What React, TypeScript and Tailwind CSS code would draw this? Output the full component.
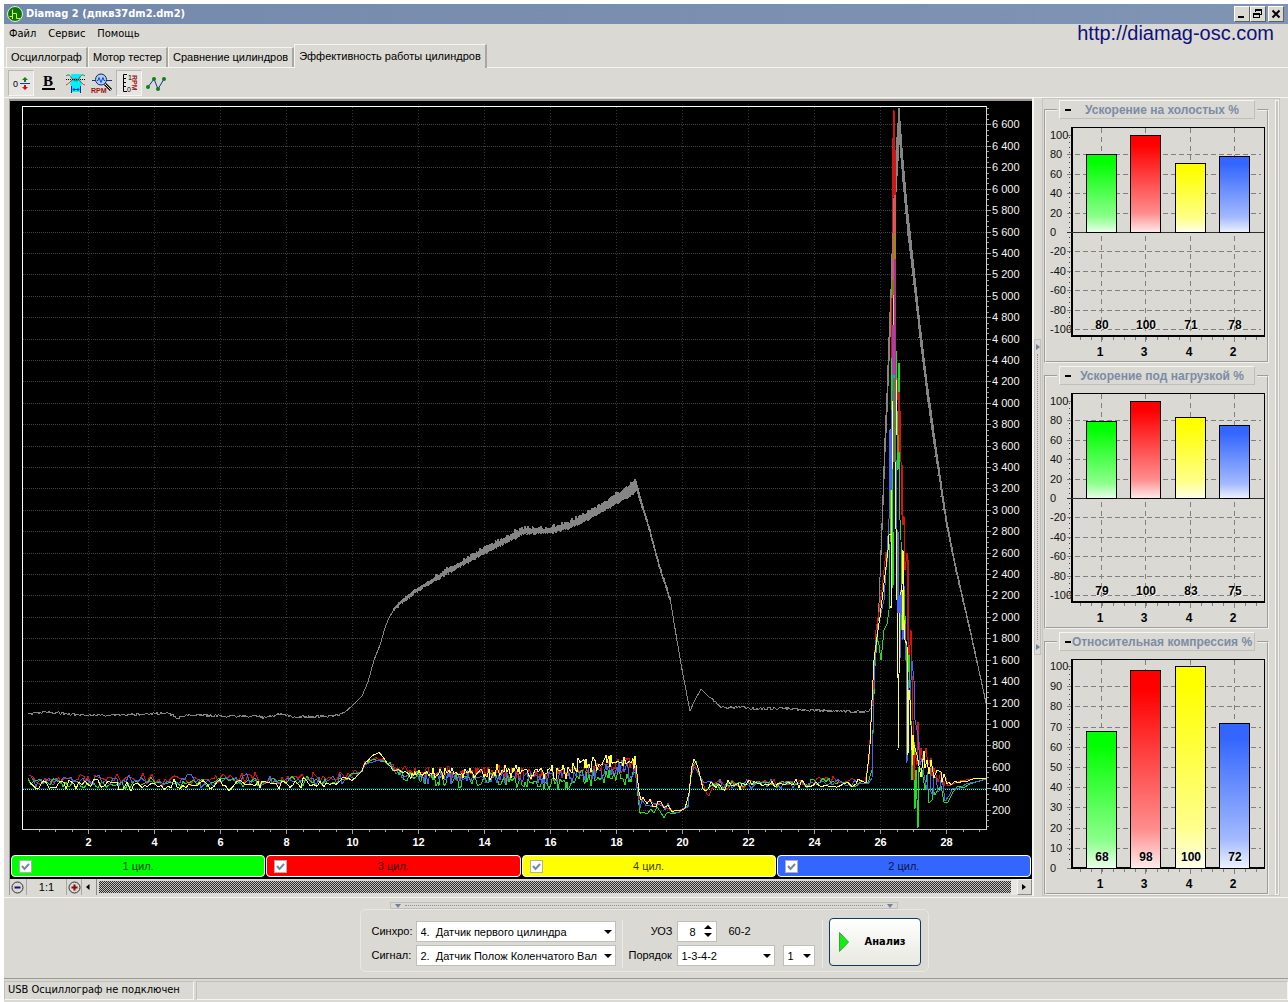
import React, { useState } from "react";

// A point of a curve, in plot pixels
type Point = [number, number];

interface IChannel {
  id: string;
  label: string;
  stroke: string;
  boxClass: string;
}

interface IBar {
  cylinder: number;
  value: number;
}

const CHANNELS: IChannel[] = [
  { id: "c1", label: "1 цил.", stroke: "#1fe01f", boxClass: "bg-[#00ff00]" },
  { id: "c3", label: "3 цил.", stroke: "#e01010", boxClass: "bg-[#ff0000]" },
  { id: "c4", label: "4 цил.", stroke: "#ffff40", boxClass: "bg-[#ffff00]" },
  { id: "c2", label: "2 цил.", stroke: "#4468e8", boxClass: "bg-[#3366ff]" },
];

// Painting order of the traces, bottom first
const PAINT_ORDER = ["c3", "c1", "c2", "c4"];

// Small deterministic generator, so that the noise is the same on each render
const makeRandom = (seed: number) => {
  let a = seed;
  return () => {
    a = (a + 0x6d2b79f5) | 0;
    let t = Math.imul(a ^ (a >>> 15), 1 | a);
    t = (t + Math.imul(t ^ (t >>> 7), 61 | t)) ^ t;
    return ((t ^ (t >>> 14)) >>> 0) / 4294967296;
  };
};

const interpolate = (points: Point[], x: number): number => {
  for (let i = 1; i < points.length; i++) {
    if (x <= points[i][0]) {
      const [x0, y0] = points[i - 1];
      const [x1, y1] = points[i];
      return y0 + ((y1 - y0) * (x - x0)) / (x1 - x0);
    }
  }
  return points[points.length - 1][1];
};

const toPath = (points: Point[]) =>
  points.map(([x, y], i) => `${i ? "L" : "M"}${x} ${y.toFixed(1)}`).join("");

const RPM: Point[] = [
  [28, 714], [42, 712], [60, 713], [80, 715], [120, 715], [150, 714], [168, 713],
  [178, 718], [190, 715], [220, 716], [258, 716], [264, 718], [280, 714], [292, 717],
  [335, 716], [345, 712], [352, 706], [362, 696], [368, 682], [374, 660], [380, 645],
  [385, 628], [388, 620], [394, 609], [400, 603], [415, 591], [440, 576], [484, 551],
  [510, 538], [524, 531], [550, 531], [568, 526], [590, 515], [620, 497], [636, 486],
  [650, 533], [660, 570], [670, 600], [677, 642], [683, 675], [690, 711], [694, 702],
  [701, 689], [710, 698], [722, 708], [740, 707], [757, 709], [780, 708], [805, 710],
  [835, 711], [865, 712], [869, 711], [872, 706], [877, 640], [879, 603], [882, 527],
  [885, 445], [887, 402], [889, 348], [891, 302], [893, 235], [896, 172], [899, 126],
  [902, 165], [907, 220], [912, 262], [920, 335], [927, 392], [936, 455], [946, 522],
  [955, 567], [965, 610], [975, 655], [986, 704],
];

// Half of the thickness of the engine speed band
const RPM_SPREAD: Point[] = [
  [28, 0], [380, 0], [400, 1], [440, 1], [480, 2], [520, 2], [560, 2], [600, 3],
  [634, 5], [640, 3], [660, 2], [676, 1], [690, 0], [880, 0], [884, 6], [897, 19],
  [903, 16], [915, 11], [935, 8], [950, 4], [970, 2], [986, 1],
];

const buildRpm = (): string => {
  const random = makeRandom(11);
  const points: Point[] = [];
  for (let x = 28; x <= 986; x++) {
    const y = interpolate(RPM, x);
    const spread = interpolate(RPM_SPREAD, x);
    if (spread < 0.7) {
      const wobble = x < 340 || (x > 710 && x < 868) ? 3 : 0;
      points.push([x, y + Math.round((random() - 0.5) * wobble)]);
      continue;
    }
    const extra = x > 430 && x < 636 ? random() * random() * 5 : random();
    points.push([x, y - spread - extra], [x, y + spread + random() * 2]);
  }
  return toPath(points);
};

// x, then the middle of the 1st, 3rd, 4th and 2nd cylinder, then the noise
const LEVELS: number[][] = [
  [28, 783, 780, 785, 781, 5],
  [190, 782, 779, 785, 781, 5],
  [335, 782, 779, 783, 781, 5],
  [352, 776, 773, 778, 777, 4],
  [361, 772, 771, 772, 772, 2],
  [366, 762, 760, 762, 762, 2],
  [374, 760, 759, 754, 762, 2],
  [380, 760, 760, 752, 761, 1],
  [386, 762, 761, 763, 763, 3],
  [396, 771, 770, 770, 773, 4],
  [415, 777, 772, 773, 775, 6],
  [450, 780, 773, 774, 777, 6],
  [500, 779, 773, 772, 777, 6],
  [535, 783, 774, 772, 778, 6],
  [570, 783, 774, 771, 778, 6],
  [580, 778, 770, 765, 772, 7],
  [600, 776, 767, 764, 771, 7],
  [635, 777, 764, 761, 770, 8],
  [637, 790, 775, 775, 785, 3],
  [640, 810, 801, 800, 803, 4],
  [645, 811, 803, 803, 805, 6],
  [668, 812, 803, 804, 805, 5],
  [671, 815, 811, 812, 812, 1],
  [680, 811, 810, 811, 812, 1],
  [688, 806, 806, 806, 806, 1],
  [691, 770, 772, 768, 776, 1],
  [694, 759, 764, 760, 768, 1],
  [698, 766, 770, 766, 771, 1],
  [703, 790, 786, 790, 786, 3],
  [709, 786, 795, 786, 784, 3],
  [718, 784, 785, 786, 784, 4],
  [760, 783, 783, 783, 784, 4],
  [862, 783, 781, 783, 784, 4],
];

// Noiseless part of each trace: the run-up, the peak and the braking
const PEAKS: Record<string, Point[]> = {
  c1: [
    [868, 783], [872, 770], [873, 730], [875, 660], [877, 638], [879, 645], [881, 660],
    [884, 630], [887, 624], [889, 610], [890, 545], [891, 430], [892, 358], [893, 588],
    [894, 380], [896, 350], [898, 470], [899, 363], [899, 500], [901, 540], [902, 630],
    [904, 590], [906, 640], [907, 690], [909, 655], [911, 720], [912, 780], [914, 740],
    [915, 809], [916, 770], [918, 828], [919, 768], [922, 770], [925, 790], [927, 775],
    [929, 803], [932, 800], [933, 788], [935, 795], [938, 790], [941, 786], [944, 802],
    [948, 802], [953, 792], [958, 786], [963, 788], [970, 784], [986, 779],
  ],
  c3: [
    [865, 783], [869, 760], [871, 720], [873, 690], [876, 630], [879, 612], [882, 590],
    [884, 570], [886, 552], [887, 562], [889, 520], [891, 470], [892, 300], [893, 138],
    [894, 110], [895, 150], [895, 400], [896, 355], [898, 400], [900, 410], [901, 462],
    [902, 478], [903, 525], [904, 516], [905, 570], [907, 553], [908, 600], [909, 660],
    [911, 630], [913, 720], [914, 780], [915, 750], [917, 765], [918, 722], [920, 760],
    [921, 748], [923, 762], [926, 748], [928, 765], [931, 758], [932, 776], [934, 768],
    [938, 782], [941, 772], [944, 786], [946, 778], [948, 786], [953, 784], [960, 781],
    [972, 779], [986, 778],
  ],
  c4: [
    [866, 783], [870, 745], [872, 700], [874, 660], [878, 630], [880, 617], [882, 600],
    [885, 575], [888, 550], [889, 535], [891, 534], [891, 608], [892, 470], [893, 402],
    [894, 295], [895, 380], [896, 529], [897, 600], [898, 678], [898, 750], [899, 675],
    [900, 600], [902, 585], [903, 550], [904, 610], [905, 640], [907, 645], [908, 755],
    [909, 690], [910, 700], [912, 750], [914, 745], [917, 755], [921, 777], [924, 751],
    [925, 768], [927, 760], [929, 774], [931, 760], [934, 778], [937, 770], [941, 772],
    [942, 782], [944, 774], [947, 784], [949, 782], [951, 785], [955, 781], [958, 783],
    [963, 781], [968, 781], [975, 778], [986, 778],
  ],
  c2: [
    [868, 784], [872, 778], [874, 690], [876, 640], [880, 618], [884, 600], [886, 570],
    [889, 520], [890, 430], [891, 480], [893, 340], [895, 340], [896, 460], [897, 600],
    [898, 530], [899, 610], [900, 660], [901, 590], [903, 640], [904, 585], [906, 660],
    [907, 763], [908, 680], [910, 700], [912, 661], [914, 680], [915, 720], [918, 735],
    [920, 765], [922, 758], [924, 775], [927, 790], [928, 772], [930, 768], [931, 792],
    [933, 795], [934, 776], [936, 778], [938, 792], [940, 790], [941, 780], [943, 785],
    [945, 801], [949, 796], [953, 788], [958, 789], [966, 784], [975, 782], [986, 779],
  ],
};

const buildTrace = (channel: number, id: string): string => {
  const random = makeRandom(101 + channel * 37);
  const middle: Point[] = LEVELS.map((row) => [row[0], row[1 + channel]]);
  const noise: Point[] = LEVELS.map((row) => [row[0], row[5]]);
  const points: Point[] = [];
  let x = 28 + channel;
  while (x < 863) {
    const amplitude = interpolate(noise, x);
    points.push([x, interpolate(middle, x) + (random() - random()) * amplitude * 1.5]);
    // Speed is higher in the middle of the record, so samples are denser
    x += x > 410 && x < 640 ? 1 + Math.round(random()) : 2 + Math.round(random() * 2);
  }
  return toPath([...points, ...PEAKS[id]]);
};

const RPM_PATH = buildRpm();
const TRACES: Record<string, string> = {};
CHANNELS.forEach((channel, i) => {
  TRACES[channel.id] = buildTrace(i, channel.id);
});

// x, top, height, width and colour of the places where traces lie over each other
const OVERLAPS: [number, number, number, number, string][] = [
  [893, 137, 60, 2, "#b82020"],
  [894, 195, 40, 2, "#e85050"],
  [892, 233, 60, 2, "#c06060"],
  [894, 234, 25, 2, "#a08a00"],
  [894, 259, 116, 2, "#b0309a"],
  [892, 280, 15, 2, "#808000"],
  [893, 295, 30, 1, "#ffd800"],
  [892, 325, 50, 3, "#b040a0"],
  [892, 375, 16, 3, "#20a890"],
  [892, 402, 60, 1, "#f4ffe0"],
  [893, 378, 84, 3, "#687838"],
  [896, 380, 55, 1, "#f4ffe0"],
  [890, 430, 60, 2, "#4468e8"],
  [893, 462, 70, 2, "#101060"],
  [898, 392, 60, 2, "#b82020"],
  [897, 435, 18, 2, "#909000"],
  [901, 465, 50, 2, "#e01010"],
  [897, 595, 18, 4, "#3f68ff"],
  [902, 590, 40, 2, "#ffff20"],
  [904, 590, 30, 1, "#50c020"],
  [907, 560, 80, 2, "#c01818"],
  [912, 735, 30, 2, "#ffff20"],
  [913, 755, 25, 2, "#ff0000"],
];

const SignalPlot: React.FC<{ visible: Record<string, boolean> }> = ({ visible }) => {
  const yOf = (rpm: number) => Math.round(831 - rpm * 0.10705) + 0.5;
  const xOf = (time: number) => Math.round(22 + time * 33) + 0.5;
  const rows = Array.from({ length: 33 }, (_, i) => (i + 1) * 200);
  const columns = Array.from({ length: 14 }, (_, i) => (i + 1) * 2);

  return (
    <svg
      viewBox="10 101 1022 752"
      className="block h-auto w-full font-['Liberation_Sans',sans-serif]"
      role="img"
      aria-label="График"
    >
      <g shapeRendering="crispEdges" fill="none">
        {/* The zero line of the signal takes the place of the 400 row */}
        {rows
          .filter((rpm) => rpm !== 400)
          .map((rpm) => (
            <path key={rpm} d={`M23 ${yOf(rpm)}H986`} stroke="#444444" strokeDasharray="1 1" />
          ))}
        {columns.map((time) => (
          <path key={time} d={`M${xOf(time)} 107V829`} stroke="#363636" strokeDasharray="1 2" />
        ))}
        <path d={RPM_PATH} stroke="#858585" />
        <path d="M23 788.5H986" stroke="#0c3838" />
        <path d="M23 789.5H986" stroke="#70f0e8" strokeDasharray="1 1" />
        {PAINT_ORDER.filter((id) => visible[id]).map((id) => (
          <path
            key={id}
            d={TRACES[id]}
            stroke={CHANNELS.find((channel) => channel.id === id)?.stroke}
          />
        ))}
        {OVERLAPS.map(([x, y, height, width, color]) => (
          <rect key={`${x}-${y}`} x={x} y={y} width={width} height={height} fill={color} />
        ))}
        <path d="M22.5 829V106.5H987" stroke="#ffffff" />
        <path d="M22 829.5H986.5V106" stroke="#d0d0cc" />
        {Array.from({ length: 58 }, (_, i) => (i + 1) / 2).map((time) => (
          <path
            key={time}
            d={`M${xOf(time)} 830v${time % 2 === 0 ? 4 : 2}`}
            stroke="#a0a0a0"
          />
        ))}
        {Array.from({ length: 135 }, (_, i) => (i + 1) * 50).map((rpm) => (
          <path key={rpm} d={`M987 ${yOf(rpm)}h${rpm % 200 === 0 ? 4 : 2}`} stroke="#a0a0a0" />
        ))}
      </g>
      <g fill="#f4f4f0" fontSize="11">
        {rows.map((rpm) => (
          <text key={rpm} x="992" y={yOf(rpm) + 3.5}>
            {rpm < 1000 ? rpm : `${Math.floor(rpm / 1000)} ${String(rpm % 1000).padStart(3, "0")}`}
          </text>
        ))}
      </g>
      <g fill="#ffffff" fontSize="11" fontWeight="bold" textAnchor="middle">
        {columns.map((time) => (
          <text key={time} x={xOf(time)} y="846">
            {time}
          </text>
        ))}
      </g>
    </svg>
  );
};

const BAR_X = [15, 59, 104, 148];
const BAR_FILL = ["#00ff00", "#ff0000", "#ffff00", "#3366ff"];

interface IBarPanelProps {
  id: string;
  title: string;
  bars: IBar[];
  signed?: boolean;
}

// Group box with one bar chart; "signed" charts go from -100 to 100
const BarPanel: React.FC<IBarPanelProps> = ({ id, title, bars, signed }) => {
  const [open, setOpen] = useState<boolean>(true);
  const zero = signed ? 105 : 209;
  const scale = signed ? 0.97 : 2.02;
  const marks = Array.from({ length: 11 }, (_, i) => (signed ? 100 - i * 20 : 100 - i * 10));
  const yOf = (value: number) => Math.round(zero - value * scale) + 0.5;

  return (
    <fieldset className="mb-[3px] border-2 border-[#f2f1ed] [border-style:groove] last:mb-0">
      <legend className="mx-auto bg-[#dad9d3] px-[2px]">
        <button
          type="button"
          onClick={() => setOpen(!open)}
          className="relative block h-[19px] w-[196px] border border-t-[#f6f5f1] border-r-[#c0bfb9] border-b-[#c0bfb9] border-l-[#f6f5f1] pl-[11px] text-center text-xs leading-4 font-bold whitespace-nowrap text-[#7c8ca6]"
        >
          <span className="absolute top-2 left-[5px] h-[2px] w-[6px] bg-black" />
          {title}
        </button>
      </legend>
      {open && (
        <svg viewBox="-25 -8 221 242" className="block w-full font-['Liberation_Sans',sans-serif]">
          <defs>
            {BAR_FILL.map((color, i) => (
              <linearGradient key={color} id={`${id}-${i}`} x1="0" y1="0" x2="0" y2="1">
                <stop offset="0" stopColor={color} />
                <stop offset="0.1" stopColor={color} />
                <stop offset="0.8" stopColor={color} stopOpacity="0.45" />
                <stop offset="1" stopColor={color} stopOpacity="0.08" />
              </linearGradient>
            ))}
          </defs>
          <g shapeRendering="crispEdges" fill="none">
            {marks.map((mark) => (
              <path
                key={mark}
                d={mark === 100 ? `M-4 ${yOf(mark)}H0` : `M-4 ${yOf(mark)}H1M4 ${yOf(mark)}H190`}
                stroke="#808080"
                strokeDasharray="5 3"
              />
            ))}
            {BAR_X.map((x) => (
              <path key={x} d={`M${x + 15.5} 1V209`} stroke="#808080" strokeDasharray="5 4" />
            ))}
            <path d="M-2 10V204" stroke="#404040" strokeDasharray="1 4" />
            <path d="M9 211.5H188" stroke="#808080" strokeWidth="3" strokeDasharray="1 10" />
            <rect x="0.5" y="0.5" width="193" height="209" stroke="#000000" />
            <path d="M0 209H194M1 0V210" stroke="#000000" strokeWidth="2" />
            {signed && <path d={`M-4 ${zero + 0.5}H193`} stroke="#303030" />}
            {bars.map((bar, i) => (
              <g key={bar.cylinder}>
                <rect
                  x={BAR_X[i] + 0.5}
                  y={yOf(bar.value)}
                  width="30"
                  height={zero - yOf(bar.value) + 0.5}
                  fill="#ffffff"
                />
                <rect
                  x={BAR_X[i] + 0.5}
                  y={yOf(bar.value)}
                  width="30"
                  height={zero - yOf(bar.value) + 0.5}
                  fill={`url(#${id}-${i})`}
                  stroke="#000000"
                />
                <path d={`M${BAR_X[i] + 15.5} 210v5`} stroke="#808080" />
              </g>
            ))}
          </g>
          <g fontSize="11" fill="#101010">
            {marks.map((mark) => (
              <text key={mark} x="-21" y={yOf(mark) + 3.5}>
                {mark}
              </text>
            ))}
          </g>
          <g fontSize="12" fontWeight="bold" textAnchor="middle" fill="#000000">
            {bars.map((bar, i) => (
              <g key={bar.cylinder}>
                <text x={BAR_X[i] + 17} y="203" fill="#f4f4f0" aria-hidden="true">
                  {bar.value}
                </text>
                <text x={BAR_X[i] + 16} y="202">
                  {bar.value}
                </text>
                <text x={BAR_X[i] + 14} y="229">
                  {bar.cylinder}
                </text>
              </g>
            ))}
          </g>
        </svg>
      )}
    </fieldset>
  );
};

// Toolbar pictures, all on a 24x22 grid
const TOOLS: { name: string; pressed?: boolean; art: React.ReactNode }[] = [
  {
    name: "Ноль",
    pressed: true,
    art: (
      <>
        <text x="4" y="15" fontSize="9" fill="#000">0</text>
        <path d="M11 11.5h10" stroke="#2233aa" />
        <path d="M16 5l3 3h-2v2h-2V8h-2z" fill="#108010" />
        <path d="M16 18l3-3h-2v-2h-2v2h-2z" fill="#d01010" />
      </>
    ),
  },
  {
    name: "Жирный",
    art: (
      <>
        <text x="7" y="14" fontSize="15" fontWeight="bold" className="font-['Liberation_Serif',serif]">B</text>
        <path d="M6 17h13" stroke="#000" strokeWidth="2" />
      </>
    ),
  },
  {
    name: "Наложение",
    art: (
      <>
        <path d="M8 2h10l-1 5 2 5-2 4v4H9v-4l-2-4 2-5z" fill="#00f0ff" />
        <path d="M3 4c2 -2 4 -1 5 1s3 4 5 4 3-2 4-4 3-3 5-1" stroke="#108040" fill="none" />
        <path d="M3 13c2 -1 3 -2 5 -4s3 -2 5 -2 3 1 4 2 3 4 5 4" stroke="#e03020" fill="none" />
        <path d="M3 7.5h19" stroke="#000" strokeDasharray="1 1" />
        <path d="M8.5 14v7M17.5 14v7M10 17.5h6M11.5 16L10 17.5l1.5 1.5M14.5 16l1.5 1.5-1.5 1.5" stroke="#103090" fill="none" />
      </>
    ),
  },
  {
    name: "Обороты",
    art: (
      <>
        <path d="M2 8.5h20" stroke="#1030a0" />
        <circle cx="11" cy="7.5" r="5.5" fill="#a8d0ff" stroke="#202850" />
        <path d="M7 8.5h1l1-3 2 5 2-5 1 3h1" stroke="#2040d0" fill="none" />
        <path d="M15 12l6 6" stroke="#000" strokeWidth="3" />
        <path d="M15 12l6 6" stroke="#f0e080" />
        <text x="1" y="21" fontSize="7" fontWeight="bold" fill="#a01010">RPM</text>
      </>
    ),
  },
  {
    name: "Шкала",
    pressed: true,
    art: (
      <>
        <path d="M10 2.5H6.5v17H10M6 6.5h3M6 10.5h3M6 14.5h3" stroke="#000" fill="none" />
        <text x="11" y="8" fontSize="7" fill="#000">1</text>
        <text x="10" y="20" fontSize="7" fill="#000">0</text>
        <text transform="translate(15 3) rotate(90)" fontSize="7" fontWeight="bold" fill="#a01010">RPM</text>
      </>
    ),
  },
  {
    name: "Точки",
    art: (
      <>
        <path d="M4 15l6-8 4 10 6-10" stroke="#1030b0" fill="none" />
        <g fill="#108010">
          <circle cx="4" cy="15" r="2" />
          <circle cx="10" cy="7" r="2" />
          <circle cx="14" cy="17" r="2" />
          <circle cx="20" cy="7" r="2" />
        </g>
      </>
    ),
  },
];

interface IComboProps {
  id: string;
  options: string[];
  className: string;
}

const Combo: React.FC<IComboProps> = ({ id, options, className }) => (
  <div className={`relative ${className}`}>
    <select
      id={id}
      aria-label={id === "cylinder" ? "Цилиндр" : undefined}
      className="block h-[21px] w-full appearance-none overflow-hidden border border-[#c0c0b8] bg-white pr-4 pl-1 text-[11px] leading-4 text-black"
    >
      {options.map((option) => (
        <option key={option}>{option}</option>
      ))}
    </select>
    <svg viewBox="0 0 8 4" className="pointer-events-none absolute top-[9px] right-1 h-1 w-2">
      <path d="M0 0h8L4 4z" />
    </svg>
  </div>
);

const TABS = ["Осциллограф", "Мотор тестер", "Сравнение цилиндров", "Эффективность работы цилиндров"];

const TAHOMA = "font-['DejaVu_Sans_Condensed','DejaVu_Sans',sans-serif]";

const App: React.FC = () => {
  const [tab, setTab] = useState<number>(3);
  const [visible, setVisible] = useState<Record<string, boolean>>({
    c1: true,
    c2: true,
    c3: true,
    c4: true,
  });

  return (
    <div className="min-h-screen bg-white pt-1 pl-1 font-['Liberation_Sans',Arial,sans-serif] text-xs text-black">
      <div className="flex min-h-[calc(100vh-4px)] flex-col bg-[#dad9d3]">
        {/* Title bar */}
        <header className="flex h-5 items-center bg-gradient-to-r from-[#748aac] to-[#8094b4] pr-1 pl-[3px]">
          <svg viewBox="0 0 16 16" className="h-4 w-4">
            <circle cx="8" cy="8" r="7.5" fill="#087808" stroke="#e8f0d0" />
            <path d="M2.5 10.5h3M5.5 13V3.5M5.5 7.5h4v5h4" stroke="#e8e840" fill="none" />
          </svg>
          <h1 className="ml-[3px] flex-1 font-['DejaVu_Sans_Condensed','DejaVu_Sans',sans-serif] text-[11px] font-bold text-white">
            Diamag 2 (дпкв37dm2.dm2)
          </h1>
          <div className="flex">
            <button type="button" aria-label="Свернуть" className="h-4 w-4 border border-t-white border-r-[#606060] border-b-[#606060] border-l-white bg-[#dad9d3]">
              <svg viewBox="0 0 14 14" className="block"><path d="M3 10h6" stroke="#000" strokeWidth="2" /></svg>
            </button>
            <button type="button" aria-label="Восстановить" className="h-4 w-4 border border-t-white border-r-[#606060] border-b-[#606060] border-l-white bg-[#dad9d3]">
              <svg viewBox="0 0 14 14" className="block" fill="none" stroke="#000" shapeRendering="crispEdges">
                <path d="M4.5 5V2.5h6v5H9M4 3.5h7M2.5 6.5h6v4h-6zM2 7.5h7" />
              </svg>
            </button>
            <button type="button" aria-label="Закрыть" className="ml-[2px] h-4 w-4 border border-t-white border-r-[#606060] border-b-[#606060] border-l-white bg-[#dad9d3]">
              <svg viewBox="0 0 14 14" className="block"><path d="M3.5 3.5l7 7M10.5 3.5l-7 7" stroke="#000" strokeWidth="2" /></svg>
            </button>
          </div>
        </header>

        {/* Menu with the link to the site */}
        <nav className={`flex h-[21px] items-center pr-[14px] pl-[5px] text-[11px] ${TAHOMA}`}>
          <button type="button" className="mr-3">Файл</button>
          <button type="button" className="mr-3">Сервис</button>
          <button type="button">Помощь</button>
          <a
            href="http://diamag-osc.com"
            className="mt-[-4px] ml-auto font-['Liberation_Sans',Arial,sans-serif] text-xl leading-5 text-[#10107c]"
          >
            http://diamag-osc.com
          </a>
        </nav>

        {/* Tabs */}
        <div role="tablist" className="flex h-[23px] items-end border-b border-[#f6f5f1] pl-[2px] text-[11px]">
          {TABS.map((name, i) => (
            <button
              key={name}
              type="button"
              role="tab"
              aria-selected={tab === i}
              onClick={() => setTab(i)}
              className={
                tab === i
                  ? "-mb-px h-6 border-t border-r-2 border-l border-t-[#f6f5f1] border-r-[#a8a7a2] border-l-[#f6f5f1] bg-[#dad9d3] px-1 pb-px"
                  : "h-5 border-t border-r-2 border-l border-t-[#f6f5f1] border-r-[#a8a7a2] border-l-[#f6f5f1] px-1"
              }
            >
              {name}
            </button>
          ))}
        </div>

        {/* Toolbar */}
        <div role="toolbar" className="flex h-[30px] items-center gap-px border-b border-[#f6f5f1] pl-[4px]">
          {TOOLS.map((tool) => (
            <button
              key={tool.name}
              type="button"
              aria-label={tool.name}
              className={
                tool.pressed
                  ? "h-[26px] w-[26px] border border-t-[#b8b7b2] border-r-[#f6f5f1] border-b-[#f6f5f1] border-l-[#b8b7b2] bg-[#e6e5e1]"
                  : "h-[26px] w-[26px] border border-transparent"
              }
            >
              <svg viewBox="0 0 24 22" className="mx-auto block h-[22px] w-6">{tool.art}</svg>
            </button>
          ))}
        </div>

        <main className="flex items-start border-b border-[#f6f5f1] pb-px">
          <section className="mt-px ml-[5px] flex-1 border-t-2 border-l border-[#9c9b96]">
            <div className="bg-black pb-[2px]">
              <SignalPlot visible={visible} />
              <div className="grid grid-cols-4 gap-px px-px pt-[2px]">
                {CHANNELS.map((channel) => (
                  <label
                    key={channel.id}
                    className={`relative flex h-[22px] items-center justify-center rounded border border-white text-[11px] text-black/80 ${channel.boxClass}`}
                  >
                    <input
                      type="checkbox"
                      checked={visible[channel.id]}
                      onChange={() => setVisible({ ...visible, [channel.id]: !visible[channel.id] })}
                      className="peer absolute left-[7px] h-[13px] w-[13px] appearance-none border border-[#b0b0b0] bg-white"
                    />
                    <svg viewBox="0 0 13 13" className="pointer-events-none absolute left-[7px] hidden h-[13px] w-[13px] peer-checked:block">
                      <path d="M3 6l2.5 3L10 4" stroke="#7888a0" strokeWidth="2" fill="none" />
                    </svg>
                    {channel.label}
                  </label>
                ))}
              </div>
            </div>
            {/* Zoom and scroll line */}
            <div className="flex h-4 items-stretch">
              <button type="button" aria-label="Уменьшить" className="w-[17px] border-r border-[#a8a7a2] pl-px">
                <svg viewBox="0 0 13 13" className="block h-[13px] w-[13px]" fill="none">
                  <circle cx="6.5" cy="6.5" r="5.5" stroke="#303030" />
                  <path d="M3.5 6.5h6" stroke="#101080" strokeWidth="2" />
                </svg>
              </button>
              <button type="button" className="w-10 border-r border-[#a8a7a2] text-[11px] leading-4">1:1</button>
              <button type="button" aria-label="Увеличить" className="w-[15px] border-r border-[#a8a7a2] pl-px">
                <svg viewBox="0 0 13 13" className="block h-[13px] w-[13px]" fill="none">
                  <circle cx="6.5" cy="6.5" r="5.5" stroke="#303030" />
                  <path d="M3.5 6.5h6M6.5 3.5v6" stroke="#900808" strokeWidth="2" />
                </svg>
              </button>
              <button type="button" aria-label="Влево" className="w-[15px] border-r border-[#8c8b86] pl-1">
                <svg viewBox="0 0 4 6" className="block h-[6px] w-1"><path d="M3.5 0v6L0 3z" /></svg>
              </button>
              <div className="my-[2px] ml-[2px] flex-1 bg-[conic-gradient(#2c2c2c_25%,#c4c3be_0_50%,#2c2c2c_0_75%,#c4c3be_0)] bg-[length:2px_2px]" />
              <div className="w-[6px] bg-[#e8e7e3]" />
              <button type="button" aria-label="Вправо" className="w-[15px] border border-t-[#f6f5f1] border-r-[#8c8b86] border-b-[#8c8b86] border-l-[#f6f5f1] pl-1">
                <svg viewBox="0 0 4 6" className="block h-[6px] w-1"><path d="M0 0v6l4-3z" /></svg>
              </button>
            </div>
          </section>

          {/* Splitter and bar charts */}
          <aside className="flex w-64 items-stretch">
            <div className="flex w-[10px] items-center border-l-2 border-[#f6f5f1]">
              <div className="flex h-[316px] w-[7px] flex-col items-center border border-[#c0bfb9] py-1">
                <svg viewBox="0 0 4 6" className="h-[6px] w-1"><path d="M0 0v6l4-3z" fill="#7080a0" /></svg>
                <div className="my-1 w-px flex-1 border-l border-dotted border-[#8890a0]" />
                <svg viewBox="0 0 4 6" className="h-[6px] w-1"><path d="M0 0v6l4-3z" fill="#7080a0" /></svg>
              </div>
            </div>
            <div className="flex w-[238px] border border-[#c6c5bf] pt-px">
              <div className="w-[226px] pl-px">
                <BarPanel
                  id="idle"
                  title="Ускорение на холостых %"
                  signed
                  bars={[
                    { cylinder: 1, value: 80 },
                    { cylinder: 3, value: 100 },
                    { cylinder: 4, value: 71 },
                    { cylinder: 2, value: 78 },
                  ]}
                />
                <BarPanel
                  id="load"
                  title="Ускорение под нагрузкой %"
                  signed
                  bars={[
                    { cylinder: 1, value: 79 },
                    { cylinder: 3, value: 100 },
                    { cylinder: 4, value: 83 },
                    { cylinder: 2, value: 75 },
                  ]}
                />
                <BarPanel
                  id="compression"
                  title="Относительная компрессия %"
                  bars={[
                    { cylinder: 1, value: 68 },
                    { cylinder: 3, value: 98 },
                    { cylinder: 4, value: 100 },
                    { cylinder: 2, value: 72 },
                  ]}
                />
              </div>
              <div className="ml-auto w-1 border border-[#f6f5f1] bg-[#c6c5bf]" />
            </div>
          </aside>
        </main>

        {/* Analysis settings */}
        <footer className="flex flex-col items-center pt-1 pr-1">
          <div className="flex h-[7px] w-[508px] items-center border border-[#c0bfb9] px-1">
            <svg viewBox="0 0 6 4" className="h-1 w-[6px]"><path d="M0 0h6L3 4z" fill="#7080a0" /></svg>
            <div className="mx-1 flex-1 border-t border-dotted border-[#8890a0]" />
            <svg viewBox="0 0 6 4" className="h-1 w-[6px]"><path d="M0 0h6L3 4z" fill="#7080a0" /></svg>
          </div>
          <form
            className="flex h-[63px] items-center rounded-md border border-[#e8e7e3] pt-[6px] pr-[7px] pl-[11px] text-[11px]"
            onSubmit={(e) => e.preventDefault()}
          >
            <div className="grid grid-cols-[44px_200px] items-center gap-y-[3px]">
              <label htmlFor="sync">Синхро:</label>
              <Combo id="sync" className="w-[200px]" options={["4.\u00a0 Датчик первого цилиндра"]} />
              <label htmlFor="signal">Сигнал:</label>
              <Combo id="signal" className="w-[200px]" options={["2.\u00a0 Датчик Полож Коленчатого Вал"]} />
            </div>
            <div className="mx-[6px] h-12 w-px bg-[#ecebe7]" />
            <div className="grid grid-cols-[44px_98px_40px] items-center gap-x-1 gap-y-[3px]">
              <label htmlFor="angle" className="text-right">УОЗ</label>
              <div className="flex h-[21px] items-center">
                <div className="relative">
                  <input
                    id="angle"
                    type="text"
                    defaultValue="8"
                    className="block h-[21px] w-10 border border-[#c0c0b8] bg-white pr-5 text-right"
                  />
                  <svg viewBox="0 0 8 12" className="pointer-events-none absolute top-1 right-[5px] h-3 w-2">
                    <path d="M4 0l4 4H0zM4 12l4-4H0z" />
                  </svg>
                </div>
                <span className="ml-3">60-2</span>
              </div>
              <span />
              <label htmlFor="order">Порядок</label>
              <Combo id="order" className="w-[98px]" options={["1-3-4-2"]} />
              <Combo id="cylinder" className="ml-1 w-8" options={["1"]} />
            </div>
            <div className="mr-[6px] ml-[3px] h-12 w-px bg-[#ecebe7]" />
            <button
              type="submit"
              className="mt-[2px] flex h-12 w-[92px] items-center self-start rounded-sm border border-[#103860] bg-gradient-to-b from-white to-[#e8e8e0] pl-[9px] font-['DejaVu_Sans_Condensed','DejaVu_Sans',sans-serif] text-[11px] font-bold"
            >
              <svg viewBox="0 0 10 20" className="mr-4 h-5 w-[10px]">
                <path d="M0.5 0.5v19l9-9.5z" fill="#10f010" stroke="#40a040" />
              </svg>
              Анализ
            </button>
          </form>
        </footer>

        {/* Status bar */}
        <div className={`mt-[6px] flex h-[22px] items-stretch border-t border-[#9c9b96] pt-[2px] text-[11px] ${TAHOMA}`}>
          <div className="w-[190px] border border-t-[#c0bfb9] border-r-[#f6f5f1] border-b-[#f6f5f1] border-l-[#c0bfb9] pl-[3px] leading-4 whitespace-nowrap">
            USB Осциллограф не подключен
          </div>
          <div className="ml-[2px] flex-1 border border-t-[#c0bfb9] border-r-[#f6f5f1] border-b-[#f6f5f1] border-l-[#c0bfb9]" />
        </div>
      </div>
    </div>
  );
};

export default App;
